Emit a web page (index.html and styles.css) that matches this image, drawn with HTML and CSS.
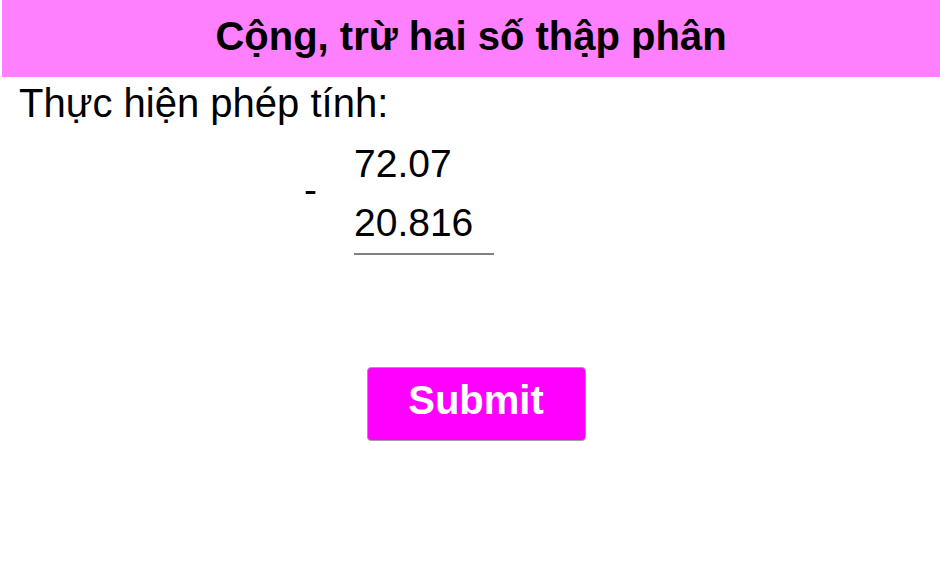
FILE: index.html
```html
<!DOCTYPE html>
<html lang="vi">
<head>
<meta charset="utf-8">
<link rel="stylesheet" href="styles.css">
</head>
<body>
<header class="title-bar"><h1 class="title">Cộng, trừ hai số thập phân</h1></header>
<p class="prompt">Thực hiện phép tính:</p>
<table class="calc">
  <tr>
    <td class="op" rowspan="2">-</td>
    <td class="num">72.07</td>
  </tr>
  <tr>
    <td class="num last">20.816</td>
  </tr>
</table>
<div class="actions"><button class="submit" type="button">Submit</button></div>
</body>
</html>
```
FILE: styles.css
```css
html, body {
  margin: 0;
  padding: 0;
  background: #ffffff;
  font-family: "Liberation Sans", Arial, sans-serif;
  color: #000000;
}
.title-bar {
  margin-left: 2px;
  height: 77px;
  background: #ff80ff;
  display: flex;
  align-items: center;
  justify-content: center;
}
.title {
  margin: 0;
  font-size: 40px;
  font-weight: bold;
  line-height: 1;
  padding-bottom: 6px;
}
.prompt {
  margin: 0;
  padding-left: 19px;
  font-size: 40px;
  line-height: 52px;
}
.calc {
  border-collapse: collapse;
  margin-left: 294px;
  margin-top: 5px;
}
.calc td {
  padding: 0;
  font-size: 39px;
  line-height: 59px;
}
.op {
  width: 50px;
  padding-left: 10px !important;
  padding-bottom: 10px !important;
  vertical-align: middle;
}
.num {
  width: 140px;
}
.last {
  border-bottom: 2px solid #808080;
  padding-bottom: 1px !important;
}
.actions {
  display: flex;
  justify-content: center;
  padding-left: 12px;
  margin-top: 112px;
}
.submit {
  width: 219px;
  height: 74px;
  background: #ff00ff;
  border: 1px solid #a0a0a0;
  border-radius: 4px;
  color: #ffffff;
  font-family: "Liberation Sans", Arial, sans-serif;
  font-size: 40px;
  font-weight: bold;
  padding: 0 0 8px 0;
}
```
